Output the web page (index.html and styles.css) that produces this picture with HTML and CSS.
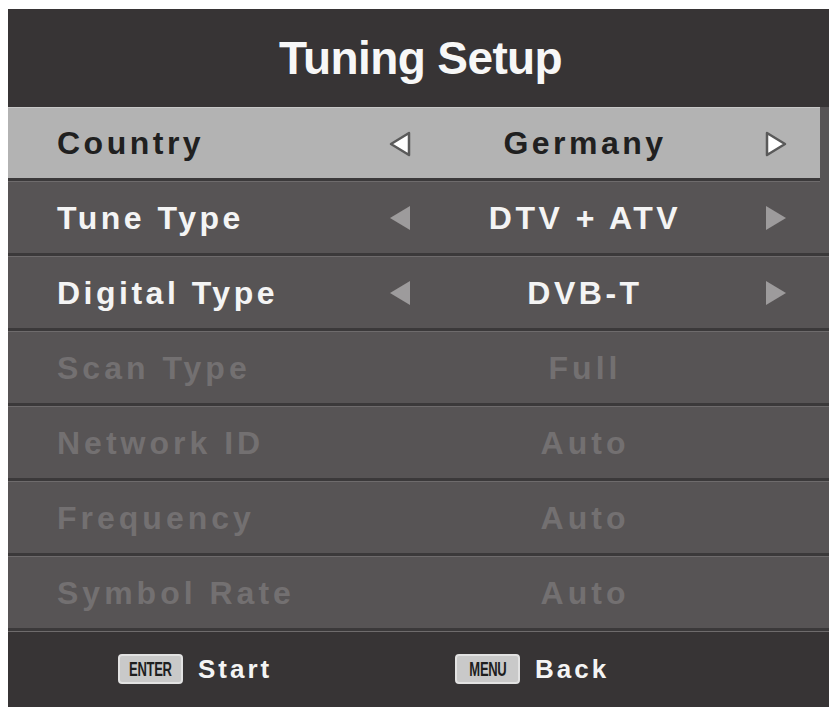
FILE: index.html
```html
<!DOCTYPE html>
<html lang="en">
<head>
  <meta charset="UTF-8">
  <meta name="viewport" content="width=device-width, initial-scale=1.0">
  <title>Tuning Setup</title>
  <link rel="stylesheet" href="styles.css">
</head>
<body>

  <div class="panel">
    <div class="header">Tuning Setup</div>

    <div class="row selected">
      <span class="label">Country</span>
      <span class="arrow"><svg viewBox="0 0 26 28" width="26" height="28"><path d="M22 3 L4 14 L22 25 Z" fill="#fff" stroke="#5a5a5a" stroke-width="2.5" stroke-linejoin="round"/></svg></span>
      <span class="value">Germany</span>
      <span class="arrow"><svg viewBox="0 0 26 28" width="26" height="28"><path d="M4 3 L22 14 L4 25 Z" fill="#fff" stroke="#5a5a5a" stroke-width="2.5" stroke-linejoin="round"/></svg></span>
    </div>

    <div class="row">
      <span class="label">Tune Type</span>
      <span class="arrow"><svg viewBox="0 0 24 26" width="24" height="26"><path d="M22 1 L2 13 L22 25 Z" fill="#9d9b9c"/></svg></span>
      <span class="value">DTV + ATV</span>
      <span class="arrow"><svg viewBox="0 0 24 26" width="24" height="26"><path d="M2 1 L22 13 L2 25 Z" fill="#9d9b9c"/></svg></span>
    </div>

    <div class="row">
      <span class="label">Digital Type</span>
      <span class="arrow"><svg viewBox="0 0 24 26" width="24" height="26"><path d="M22 1 L2 13 L22 25 Z" fill="#9d9b9c"/></svg></span>
      <span class="value">DVB-T</span>
      <span class="arrow"><svg viewBox="0 0 24 26" width="24" height="26"><path d="M2 1 L22 13 L2 25 Z" fill="#9d9b9c"/></svg></span>
    </div>

    <div class="row disabled">
      <span class="label">Scan Type</span>
      <span class="arrow"></span>
      <span class="value">Full</span>
      <span class="arrow"></span>
    </div>

    <div class="row disabled">
      <span class="label">Network ID</span>
      <span class="arrow"></span>
      <span class="value">Auto</span>
      <span class="arrow"></span>
    </div>

    <div class="row disabled">
      <span class="label">Frequency</span>
      <span class="arrow"></span>
      <span class="value">Auto</span>
      <span class="arrow"></span>
    </div>

    <div class="row disabled">
      <span class="label">Symbol Rate</span>
      <span class="arrow"></span>
      <span class="value">Auto</span>
      <span class="arrow"></span>
    </div>

    <div class="footer">
      <div class="hint first">
        <span class="key"><span>ENTER</span></span>
        <span class="hint-text">Start</span>
      </div>
      <div class="hint">
        <span class="key"><span>MENU</span></span>
        <span class="hint-text">Back</span>
      </div>
    </div>
  </div>

</body>
</html>
```

FILE: styles.css
```css
* { box-sizing: border-box; margin: 0; padding: 0; }
html, body { overflow: hidden; }
body {
  background: #fff;
  font-family: "Liberation Sans", Arial, sans-serif;
  padding: 9px 0 0 8px;
}
.panel {
  width: 821px;
  background: #575455;
}
.header {
  height: 98px;
  background: #373435;
  color: #f7f7f7;
  font-size: 46px;
  font-weight: bold;
  letter-spacing: -0.6px;
  display: flex;
  align-items: center;
  justify-content: center;
  padding-left: 4px;
}
.row {
  height: 75px;
  display: grid;
  grid-template-columns: 319px 48px 322px 60px;
  align-items: center;
  padding-left: 49px;
  border-bottom: 1px solid #6e6b6c;
  box-shadow: inset 0 -3px 0 #3b393a;
  padding-bottom: 2px;
  font-size: 32px;
  font-weight: bold;
  letter-spacing: 3.5px;
  color: #f4f4f4;
}
.row.selected {
  background: #b3b3b3;
  margin-right: 9px;
  color: #202020;
  border-top: 1px solid #c8c8c8;
  box-shadow: 9px 0 0 #575455, inset 0 -3px 0 #3b393a;
}
.row.disabled { color: #737071; letter-spacing: 4px; }
.arrow {
  display: flex;
  justify-content: center;
  align-items: center;
}
.value { text-align: center; }
.footer {
  height: 80px;
  background: #373435;
  display: flex;
  align-items: center;
  padding-left: 110px;
  padding-bottom: 6px;
}
.hint {
  display: flex;
  align-items: center;
  gap: 15px;
}
.hint.first { width: 337px; }
.key {
  width: 65px;
  height: 30px;
  background: #c9c9c9;
  border: 2px solid #e2e2e2;
  border-radius: 4px;
  display: flex;
  align-items: center;
  justify-content: center;
  overflow: hidden;
}
.key span {
  font-size: 21px;
  font-weight: bold;
  color: #1e1e1e;
  transform: scaleX(0.62);
  letter-spacing: -0.5px;
}
.hint-text {
  color: #f4f4f4;
  font-size: 26px;
  font-weight: bold;
  letter-spacing: 3px;
}
```
